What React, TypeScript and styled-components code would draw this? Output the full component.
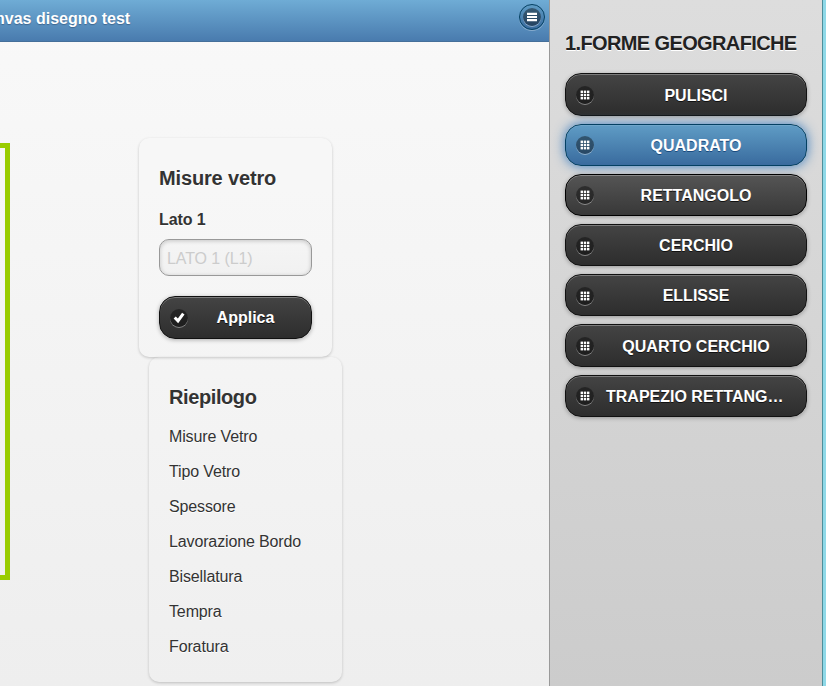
import React from 'react';
import styled, { createGlobalStyle, css } from 'styled-components';

const Global = createGlobalStyle`
  * { box-sizing: border-box; }
  body {
    margin: 0;
    overflow: hidden;
    font: 16px/20px "Liberation Sans", Arial, sans-serif;
    color: #333;
    background: #8fd9e8;
  }
  h1, h3, p { margin: 0; }
`;

const Screen = styled.div`
  display: flex;
  width: 826px;
  height: 686px;
  overflow: hidden;
`;

const Page = styled.main`
  width: 549px;
  height: 686px;
  flex: none;
  display: flex;
  flex-direction: column;
  overflow: hidden;
  background: linear-gradient(#f9f9f9, #eee);
`;

const Header = styled.header`
  flex: none;
  display: flex;
  justify-content: space-between;
  height: 42px;
  padding: 4px 4px 0 0;
  border-bottom: 1px solid #456f9a;
  background: linear-gradient(#6facd5, #497bae);
`;

const Title = styled.h1`
  margin: 5px 0 0 -5px;
  font-size: 16px;
  line-height: 20px;
  color: #fff;
  text-shadow: 0 1px 1px #3e6790;
  white-space: nowrap;
`;

const MenuButton = styled.button`
  display: flex;
  align-items: center;
  justify-content: center;
  width: 26px;
  height: 26px;
  padding: 0;
  border: 1px solid #044062;
  border-radius: 50%;
  background: linear-gradient(#5f9cc5, #396b9e);
  box-shadow: 0 1px 0 rgba(255, 255, 255, 0.3);
`;

const Disc = styled.span`
  display: flex;
  flex: none;
  width: 18px;
  height: 18px;
  border-radius: 50%;
  background: rgba(0, 0, 0, 0.4);
  box-shadow: 0 1px 0 rgba(255, 255, 255, 0.4);
`;

const Content = styled.div`
  flex: 1;
  display: flex;
`;

const Canvas = styled.div`
  width: 10px;
  height: 437px;
  margin-top: 101px;
  border: solid #9c0;
  border-width: 5px 5px 5px 0;
`;

const Cards = styled.div`
  margin: 96px 0 0 129px;
`;

const Card = styled.section<{ $offset?: number; $height: number }>`
  width: 193px;
  height: ${(p) => p.$height}px;
  margin-left: ${(p) => p.$offset ?? 0}px;
  padding: 29px 20px 0;
  border-radius: 10px;
  box-shadow: 0 1px 3px rgba(0, 0, 0, 0.2);
  background: rgba(255, 255, 255, 0.1);
  text-shadow: 0 1px 0 #fff;
`;

const CardTitle = styled.h3<{ $spacing?: number }>`
  font-size: 20px;
  line-height: 22px;
  letter-spacing: ${(p) => p.$spacing ?? -0.15}px;
`;

const Label = styled.label`
  display: block;
  margin-top: 21px;
  font-weight: bold;
  letter-spacing: -0.1px;
`;

const Input = styled.input`
  display: block;
  width: 153px;
  height: 37px;
  margin: 9px 0 20.4px;
  padding: 3px 7px 1px;
  border: 1px solid #999;
  border-radius: 10px;
  outline: 0;
  background: linear-gradient(#f5f5f5, #f1f1f1);
  box-shadow: inset 0 1px 4px rgba(0, 0, 0, 0.2);
  font: 16px "Liberation Sans", Arial, sans-serif;
  letter-spacing: -0.1px;
  &::placeholder { color: #ccc; opacity: 1; }
`;

const Summary = styled.p`
  margin-top: 15px;
  letter-spacing: -0.13px;
  ${CardTitle} + & { margin-top: 19px; }
`;

const Button = styled.button<{ $tone?: 'active' | 'hover' }>`
  display: flex;
  align-items: center;
  flex: none;
  width: 100%;
  height: 42.2px;
  padding: 1px 20px 0 10px;
  border: 1px solid #111;
  border-radius: 16px;
  background: linear-gradient(#444, #2d2d2d);
  box-shadow: 0 1px 4px rgba(0, 0, 0, 0.3), inset 0 1px 0 rgba(255, 255, 255, 0.3);
  color: #fff;
  font: bold 16px/20px "Liberation Sans", Arial, sans-serif;
  text-shadow: 0 1px 0 #111;
  ${(p) => p.$tone === 'active' && css`
    border-color: #044062;
    background: linear-gradient(#5f9cc5, #396b9e);
    box-shadow: 0 0 12px #387bbe, inset 0 1px 0 rgba(255, 255, 255, 0.1);
    text-shadow: 0 1px 0 #194b7e;
  `}
  ${(p) => p.$tone === 'hover' && css`
    border-color: #000;
    background: linear-gradient(#555, #383838);
  `}
`;

const ButtonText = styled.span<{ $top?: number }>`
  flex: 1;
  min-width: 0;
  padding: ${(p) => p.$top ?? 1.5}px 0 0 12px;
  overflow: hidden;
  text-overflow: ellipsis;
  white-space: nowrap;
  text-align: center;
`;

const Panel = styled.aside`
  width: 274px;
  height: 686px;
  flex: none;
  padding: 32px 15px 0;
  border-left: 1px solid #999;
  border-right: 1px solid #4f8f9b;
  background: linear-gradient(#ddd, #ccc);
`;

const PanelTitle = styled.h3`
  color: #222;
  font-size: 20px;
  line-height: 22px;
  letter-spacing: -0.62px;
  white-space: nowrap;
  text-shadow: 0 1px 0 #fff;
`;

const ShapeList = styled.nav`
  display: flex;
  flex-direction: column;
  gap: 8px;
  width: 242px;
  margin-top: 19.4px;
`;

const GridIcon = () => (
  <Disc>
    <svg width="18" height="18" fill="#fff">
      {[4.6, 7.8, 11].flatMap((y) => [4.6, 7.8, 11].map((x) => <rect key={`${x}-${y}`} x={x} y={y} width="2.4" height="2.4" />))}
    </svg>
  </Disc>
);

const CheckIcon = () => (
  <Disc>
    <svg width="18" height="18" fill="none" stroke="#fff" strokeWidth="3">
      <path d="M4.7 8.5 8 11.9 13.3 4.6" />
    </svg>
  </Disc>
);

const BarsIcon = () => (
  <Disc>
    <svg width="18" height="18" fill="#fff">
      <path d="M4 4.7h10v2.3H4zM4 8h10v2H4zM4 11h10v2.3H4z" />
    </svg>
  </Disc>
);

const shapes: { name: string; tone?: 'active' | 'hover' }[] = [
  { name: 'PULISCI' },
  { name: 'QUADRATO', tone: 'active' },
  { name: 'RETTANGOLO', tone: 'hover' },
  { name: 'CERCHIO' },
  { name: 'ELLISSE' },
  { name: 'QUARTO CERCHIO' },
  { name: 'TRAPEZIO RETTANGOLO' },
];

const summary = ['Misure Vetro', 'Tipo Vetro', 'Spessore', 'Lavorazione Bordo', 'Bisellatura', 'Tempra', 'Foratura'];

export default function App() {
  return (
    <>
      <Global />
      <Screen>
        <Page>
          <Header>
            <Title>nvas disegno test</Title>
            <MenuButton aria-label="Menu"><BarsIcon /></MenuButton>
          </Header>
          <Content>
            <Canvas />
            <Cards>
              <Card $height={219}>
                <CardTitle>Misure vetro</CardTitle>
                <Label htmlFor="lato1">Lato 1</Label>
                <Input id="lato1" placeholder="LATO 1 (L1)" />
                <Button><CheckIcon /><ButtonText $top={0.8}>Applica</ButtonText></Button>
              </Card>
              <Card $height={325} $offset={10}>
                <CardTitle $spacing={-0.4}>Riepilogo</CardTitle>
                {summary.map((s) => <Summary key={s}>{s}</Summary>)}
              </Card>
            </Cards>
          </Content>
        </Page>
        <Panel>
          <PanelTitle>1.FORME GEOGRAFICHE</PanelTitle>
          <ShapeList>
            {shapes.map((s) => (
              <Button key={s.name} $tone={s.tone}>
                <GridIcon />
                <ButtonText>{s.name}</ButtonText>
              </Button>
            ))}
          </ShapeList>
        </Panel>
      </Screen>
    </>
  );
}
